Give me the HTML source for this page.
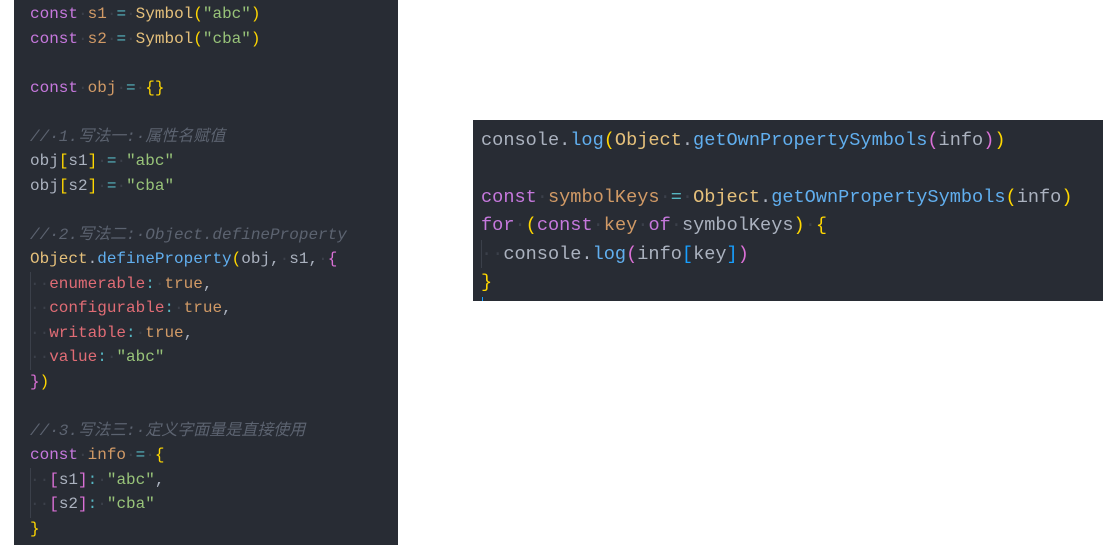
<!DOCTYPE html>
<html><head><meta charset="utf-8"><style>
body{margin:0;width:1105px;height:545px;background:#fff;position:relative;overflow:hidden}
pre{margin:0;font-family:"Liberation Mono","Noto Sans CJK SC",monospace;color:#abb2bf;white-space:pre}
#l{position:absolute;left:14px;top:0;width:384px;height:545px;background:#282c34}
#l pre{position:absolute;left:16px;top:2px;font-size:16px;line-height:24.5px}
#r{position:absolute;left:473px;top:120px;width:630px;height:181px;background:#282c34}
#r pre{position:absolute;left:8px;top:7px;font-size:18.6px;line-height:28.4px}
.k{color:#c678dd}.v{color:#d19a66}.o{color:#56b6c2}.c{color:#e5c07b}.s{color:#98c379}.y{color:#ffd700}.f{color:#61afef}.m{color:#5c6370;font-style:italic}.p{color:#e06c75}.d{color:#3b404a}.pk{color:#da70d6}.bl{color:#179fff}
.gd{position:absolute;width:1px;background:#3b404a}
</style></head><body>
<div id="l"><div class="gd" style="left:16px;top:272px;height:98px"></div><div class="gd" style="left:16px;top:468px;height:50px"></div><pre><span class="k">const</span><span class="d">·</span><span class="v">s1</span><span class="d">·</span><span class="o">=</span><span class="d">·</span><span class="c">Symbol</span><span class="y">(</span><span class="s">"abc"</span><span class="y">)</span>
<span class="k">const</span><span class="d">·</span><span class="v">s2</span><span class="d">·</span><span class="o">=</span><span class="d">·</span><span class="c">Symbol</span><span class="y">(</span><span class="s">"cba"</span><span class="y">)</span>

<span class="k">const</span><span class="d">·</span><span class="v">obj</span><span class="d">·</span><span class="o">=</span><span class="d">·</span><span class="y">{}</span>

<span class="m">//·1.写法一:·属性名赋值</span>
obj<span class="y">[</span>s1<span class="y">]</span><span class="d">·</span><span class="o">=</span><span class="d">·</span><span class="s">"abc"</span>
obj<span class="y">[</span>s2<span class="y">]</span><span class="d">·</span><span class="o">=</span><span class="d">·</span><span class="s">"cba"</span>

<span class="m">//·2.写法二:·Object.defineProperty</span>
<span class="c">Object</span>.<span class="f">defineProperty</span><span class="y">(</span>obj,<span class="d">·</span>s1,<span class="d">·</span><span class="pk">{</span>
<span class="d">··</span><span class="p">enumerable</span><span class="o">:</span><span class="d">·</span><span class="v">true</span>,
<span class="d">··</span><span class="p">configurable</span><span class="o">:</span><span class="d">·</span><span class="v">true</span>,
<span class="d">··</span><span class="p">writable</span><span class="o">:</span><span class="d">·</span><span class="v">true</span>,
<span class="d">··</span><span class="p">value</span><span class="o">:</span><span class="d">·</span><span class="s">"abc"</span>
<span class="pk">}</span><span class="y">)</span>

<span class="m">//·3.写法三:·定义字面量是直接使用</span>
<span class="k">const</span><span class="d">·</span><span class="v">info</span><span class="d">·</span><span class="o">=</span><span class="d">·</span><span class="y">{</span>
<span class="d">··</span><span class="pk">[</span>s1<span class="pk">]</span><span class="o">:</span><span class="d">·</span><span class="s">"abc"</span>,
<span class="d">··</span><span class="pk">[</span>s2<span class="pk">]</span><span class="o">:</span><span class="d">·</span><span class="s">"cba"</span>
<span class="y">}</span></pre></div>
<div id="r"><div class="gd" style="left:8px;top:120px;height:28px"></div><div class="gd" style="left:9px;top:177px;height:4px;background:#179fff"></div><pre>console.<span class="f">log</span><span class="y">(</span><span class="c">Object</span>.<span class="f">getOwnPropertySymbols</span><span class="pk">(</span>info<span class="pk">)</span><span class="y">)</span>

<span class="k">const</span><span class="d">·</span><span class="v">symbolKeys</span><span class="d">·</span><span class="o">=</span><span class="d">·</span><span class="c">Object</span>.<span class="f">getOwnPropertySymbols</span><span class="y">(</span>info<span class="y">)</span>
<span class="k">for</span><span class="d">·</span><span class="y">(</span><span class="k">const</span><span class="d">·</span><span class="v">key</span><span class="d">·</span><span class="k">of</span><span class="d">·</span>symbolKeys<span class="y">)</span><span class="d">·</span><span class="y">{</span>
<span class="d">··</span>console.<span class="f">log</span><span class="pk">(</span>info<span class="bl">[</span>key<span class="bl">]</span><span class="pk">)</span>
<span class="y">}</span></pre></div>
</body></html>
